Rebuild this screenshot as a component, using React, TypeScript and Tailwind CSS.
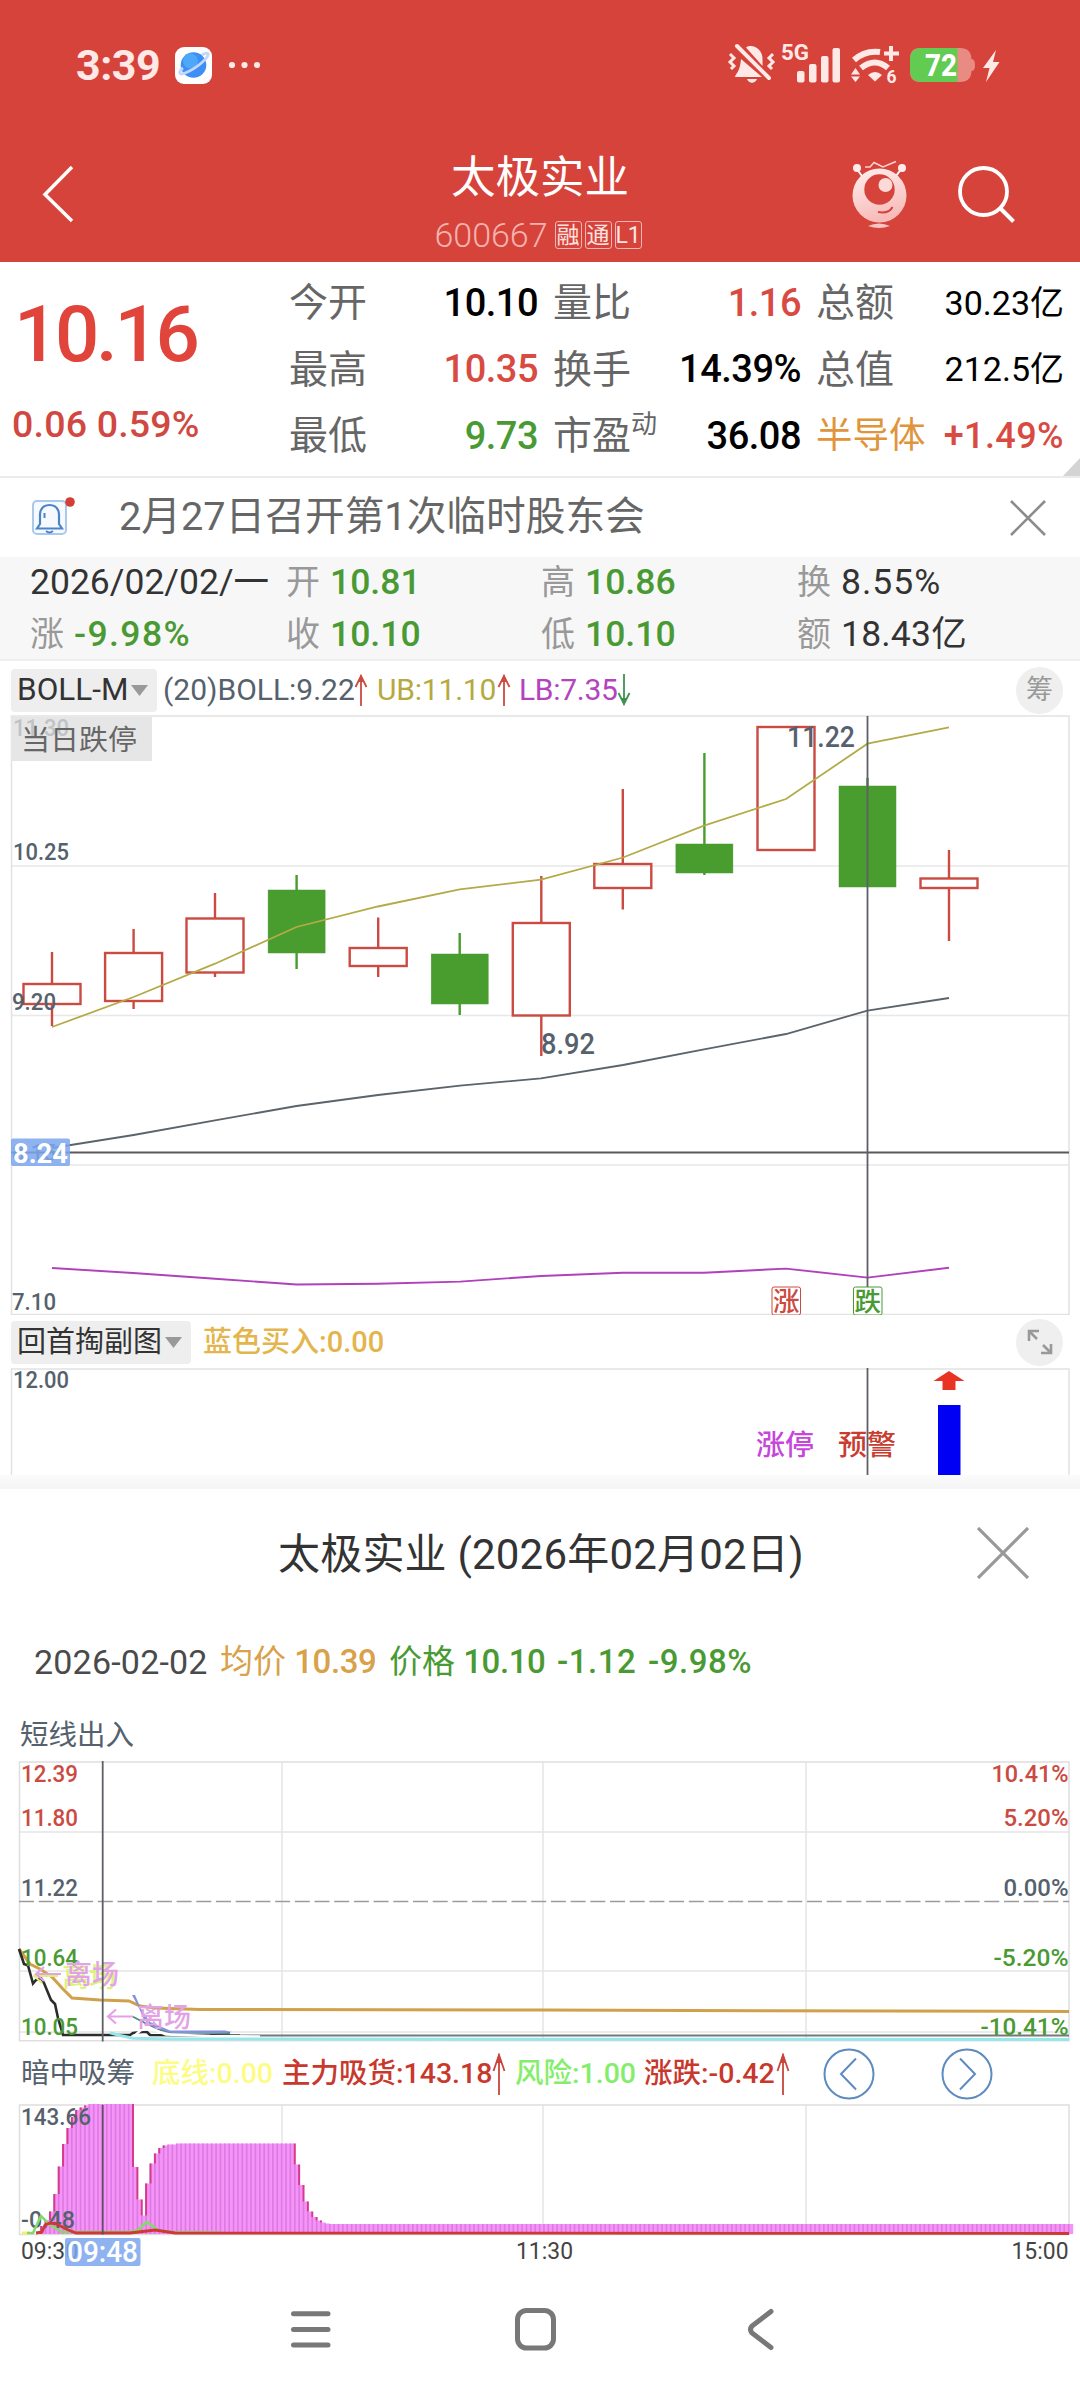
import type { ReactNode } from "react";

const RED = "#cb4a41";
const GREEN = "#4a9a34";
const SLATE = "#55616d";

// Monthly candles, in chart pixels: high / body top / body bottom / low
type Candle = { x: number; high: number; top: number; bottom: number; low: number; up: boolean };

const CANDLES: Candle[] = [
  { x: 52, high: 952, top: 984, bottom: 1004, low: 1026, up: true },
  { x: 133.6, high: 929, top: 953, bottom: 1001, low: 1009, up: true },
  { x: 215, high: 893, top: 918.5, bottom: 972.5, low: 977, up: true },
  { x: 296.6, high: 875, top: 890, bottom: 953, low: 969, up: false },
  { x: 378.2, high: 917.5, top: 948, bottom: 966, low: 977, up: true },
  { x: 459.7, high: 933, top: 954, bottom: 1004, low: 1015, up: false },
  { x: 541.3, high: 876, top: 923, bottom: 1015.5, low: 1056, up: true },
  { x: 622.8, high: 789, top: 864, bottom: 888, low: 909.5, up: true },
  { x: 704.4, high: 753, top: 844, bottom: 873, low: 875, up: false },
  { x: 786, high: 727, top: 727, bottom: 850, low: 850, up: true },
  { x: 867.5, high: 778, top: 786, bottom: 887, low: 887, up: false },
  { x: 949, high: 850, top: 878.5, bottom: 888, low: 941, up: true },
];

const UPPER =
  "52,1027 133.6,997 215,963.7 296.5,927 378,906.5 459.7,889.4 541,879.6 623,857.5 704,825.7 786,799 867.5,743.7 949,727.3";
const MIDDLE =
  "52,1148 133.6,1135 215,1120.4 296.5,1106 378,1095 460,1085.7 541,1078.4 623,1065 704,1049.4 786,1034 867.5,1010.6 949,998";
const LOWER =
  "52,1268 133,1273 215,1278.8 296.5,1284.5 378,1283.7 460,1281.6 541,1276 623,1272.7 704,1272.7 786,1268.6 867.5,1277.6 949,1267.8";

// Top edge of each volume bar; long flat runs are given as [y, count]
const BAR_RUNS: [number, number][] = [
  [2226, 1], [2220, 1], [2211.5, 1], [2194, 1], [2166.5, 1], [2144, 1], [2128, 1], [2117, 1],
  [2110, 1], [2107.5, 1], [2105.5, 1], [2104, 10], [2167, 1], [2199.5, 1], [2215.5, 1],
  [2183.5, 1], [2163.5, 1], [2153.5, 1], [2148, 1], [2145.5, 1], [2144.5, 2], [2143.5, 27],
  [2164.5, 1], [2185, 1], [2201.5, 1], [2211.5, 1], [2217, 1], [2220.5, 1], [2222.5, 1],
  [2223.5, 1], [2224, 230],
];

const BAR_STEP = 4.372;
const BARS = BAR_RUNS.flatMap(([y, n]) => Array.from({ length: n }, () => y))
  .map((y, i) => ({ x: 41.2 + i * BAR_STEP, y }))
  .filter((bar) => bar.x < 1072);

type LabelProps = {
  x: number;
  y: number;
  w: number;
  children: ReactNode;
  size?: number;
  fill?: string;
  weight?: number;
  end?: boolean;
};

function Label({ x, y, w, children, size = 24.5, fill = SLATE, weight = 500, end }: LabelProps) {
  return (
    <text
      x={end ? x - w : x}
      y={y}
      fontSize={size}
      fill={fill}
      fontWeight={weight}
      textLength={w}
      lengthAdjust="spacingAndGlyphs"
    >
      {children}
    </text>
  );
}

function Trend({ color, down = false }: { color: string; down?: boolean }) {
  return (
    <svg width="14" height="32" viewBox="0 0 14 32" fill="none" className={down ? "shrink-0 rotate-180" : "shrink-0"}>
      <path d="M7 2V32M1.500 13L7 2L12.500 13" stroke={color} strokeWidth="1.800" />
      <path d="M7 0L9.500 8H4.500Z" fill={color} />
    </svg>
  );
}

function TallTrend() {
  return (
    <svg width="14" height="42" viewBox="0 0 14 42" fill="none" className="shrink-0">
      <path d="M7 2V42M1.500 18L7 2L12.500 18" stroke="#c8453c" strokeWidth="1.800" />
      <path d="M7 0L10 10H4Z" fill="#c8453c" />
    </svg>
  );
}

function StatusBar() {
  return (
    <div className="flex h-[130px] items-center pl-[76px] pr-[80px] text-[#ffe9e7]">
      <span className="w-[97px] text-[43px] font-bold leading-none tracking-[-0.500px]">3:39</span>
      <svg width="90" height="40" viewBox="173 45 90 40">
        <rect x="175" y="47" width="37" height="37" rx="9" fill="#fff" />
        <circle cx="193.500" cy="65" r="12.800" fill="#3d8ff5" />
        <circle cx="190.500" cy="61" r="7.500" fill="#55b2fb" opacity=".7" />
        <path d="M202 55c5-3 8-2 5 2c-5 7-17 15-25 17c-4 0-2-4 1-6" fill="none" stroke="#c3d6fb" strokeWidth="2.800" />
        <circle cx="232" cy="65" r="3.100" fill="#ffe9e7" />
        <circle cx="244.500" cy="65" r="3.100" fill="#ffe9e7" />
        <circle cx="257" cy="65" r="3.100" fill="#ffe9e7" />
      </svg>
      <svg className="ml-auto" width="275" height="50" viewBox="725 40 275 50" fill="#ffe9e7">
        {/* Muted bell */}
        <path d="M746 47.500C753 43 763 50 762.500 59L762.500 66ZM741 59L762 77H735C736 73 740 72 741 59ZM747 79H757C755 84 749 84 747 79Z" />
        <path d="M737 46L769 78" stroke="#ffe9e7" strokeWidth="4" strokeLinecap="round" />
        <path d="M730 54l4 4-4 4 4 4-3 3M773 54l-4 4 4 4-4 4 3 3" fill="none" stroke="#ffe9e7" strokeWidth="3" />
        <text x="781" y="59.500" fontSize="22" fontWeight="700" textLength="28" lengthAdjust="spacingAndGlyphs">5G</text>
        <rect x="797" y="71" width="7.500" height="11.500" rx="2" />
        <rect x="809" y="64" width="7.500" height="18.500" rx="2" />
        <rect x="821" y="56" width="7.500" height="26.500" rx="2" />
        <rect x="832.500" y="48" width="7.500" height="34.500" rx="2" />
        {/* Wi-Fi 6 */}
        <path d="M854 60Q865 50 880 52" fill="none" stroke="#ffe9e7" strokeWidth="6" />
        <path d="M861 68Q875 57 888 68" fill="none" stroke="#ffe9e7" strokeWidth="6" />
        <path d="M868 75Q875 69 882 75L875 81.500Z" />
        <path d="M891 46V61M884 53.500H899" stroke="#ffe9e7" strokeWidth="4" />
        <path d="M855.500 68L860 74.500H851ZM855.500 82L860 76.500H851Z" />
        <text x="886.500" y="83" fontSize="17.500" fontWeight="700">6</text>
        {/* Battery */}
        <path d="M920 48H960Q971 48 971.500 59Q975 59 975 65Q975 71 971.500 71Q971 82 960 82H920Q910 82 910 71V59Q910 48 920 48Z" fill="#e98a83" />
        <path d="M922 48H957.500V82H922Q910 82 910 70V60Q910 48 922 48Z" fill="#62cb52" />
        <text x="925" y="76" fontSize="31" fontWeight="800" fill="#fff" textLength="32" lengthAdjust="spacingAndGlyphs">72</text>
        <path d="M996 50L983 68H989.500L986 82L999.500 62H993Z" />
      </svg>
    </div>
  );
}

function Header() {
  return (
    <header className="h-[262px] bg-[#d6433b] text-white">
      <StatusBar />
      <div className="flex h-[132px] items-start pl-[42px]">
        <svg className="mt-[34px]" width="172" height="60" viewBox="42 164 172 60" fill="none">
          <path d="M72 167L45 194.500L72 221" stroke="#fff" strokeWidth="3.500" />
        </svg>
        <div className="ml-[206px] mt-5 flex w-[240px] flex-col items-center">
          <h1 className="text-[44.500px] leading-[56px]">太极实业</h1>
          <div className="mt-[9px] flex items-center gap-[3px] whitespace-nowrap pr-1 text-[#ffe3e0]">
            <span className="mr-1 text-[34px] font-light leading-[40px] text-[#f5b3ae]">600667</span>
            {["融", "通", "L1"].map((tag) => (
              <span
                key={tag}
                className="flex h-7 w-[27px] items-center justify-center rounded-[3px] border border-[#f2b5b1] text-[23px] leading-none"
              >
                {tag}
              </span>
            ))}
          </div>
        </div>
        <svg className="ml-[188px] mt-[26px]" width="172" height="80" viewBox="848 156 172 80" fill="none">
          <defs>
            <linearGradient id="mascot" x1="0" y1="0" x2="0.300" y2="1">
              <stop offset="0" stopColor="#fff0ef" />
              <stop offset="1" stopColor="#f7bcb9" />
            </linearGradient>
          </defs>
          <path d="M856 168L862 176M902 168L896 176" stroke="#fff" strokeWidth="2" />
          <circle cx="857" cy="168" r="4" fill="#ffecea" />
          <circle cx="902" cy="168" r="4" fill="#ffecea" />
          <path d="M865 167H870L874 162.500L883 167L896 161.500" stroke="#ffd4d1" strokeWidth="1.500" />
          <circle cx="879.500" cy="195.500" r="27" fill="url(#mascot)" />
          <circle cx="879.500" cy="189.500" r="15.200" fill="#d6433b" />
          <circle cx="885.500" cy="185" r="7" fill="#fbdad8" />
          <path d="M878 212Q889 214 892.500 207" stroke="#d6433b" strokeWidth="2" />
          <path d="M868 226Q879 221 890 226Q879 230 868 226Z" fill="#f7c6c3" />
          <circle cx="983.500" cy="191.500" r="23.500" stroke="#fff" strokeWidth="3.800" />
          <path d="M1001 209L1013.500 221.500" stroke="#fff" strokeWidth="4" />
        </svg>
      </div>
    </header>
  );
}

type QuoteCell = { label: ReactNode; value: string; tone?: string; labelTone?: string; size?: string };

const QUOTES: QuoteCell[][] = [
  [
    { label: "今开", value: "10.10" },
    { label: "最高", value: "10.35", tone: "text-[#d94b42]" },
    { label: "最低", value: "9.73", tone: "text-[#4a9a34]" },
  ],
  [
    { label: "量比", value: "1.16", tone: "text-[#d94b42]" },
    { label: "换手", value: "14.39%" },
    { label: <>市盈<span className="relative -top-4 text-[26px]">动</span></>, value: "36.08" },
  ],
  [
    { label: "总额", value: "30.23亿", size: "text-[34px]" },
    { label: "总值", value: "212.5亿", size: "text-[34px]" },
    {
      label: "半导体",
      value: "+1.49%",
      size: "text-[36px] font-medium tracking-[0.400px]",
      tone: "text-[#d94b42]",
      labelTone: "text-[36.500px] text-[#e0943c]",
    },
  ],
];

function QuotePanel() {
  return (
    <section className="relative flex h-[216px] border-b-2 border-[#ebebeb]">
      <div className="w-[289px] text-[#e0443a]">
        <p className="mt-[26px] pl-[14px] text-[78px] font-medium leading-[94px] tracking-[-3.300px]">10.16</p>
        <p className="mt-5 pl-3 text-[37.500px] font-medium leading-[44px] tracking-[0.200px] text-[#d0483f]">0.06 0.59%</p>
      </div>
      <div className="grid grid-cols-[249px_248px_248px] gap-x-[15px] pt-[8px]">
        {QUOTES.map((column, i) => (
          <dl key={i}>
            {column.map((cell) => (
              <div key={cell.value} className="flex h-[66.500px] items-center justify-between whitespace-nowrap">
                <dt className={cell.labelTone ?? "text-[39px] text-[#666]"}>{cell.label}</dt>
                <dd
                  className={`${cell.size ?? "text-[38px] font-medium tracking-[-0.500px]"} ${cell.tone ?? "text-black"}`}
                >
                  {cell.value}
                </dd>
              </div>
            ))}
          </dl>
        ))}
      </div>
      <svg className="absolute bottom-0 right-0" width="17" height="18">
        <path d="M17 0V18H0Z" fill="#d4d4d4" />
      </svg>
    </section>
  );
}

function Notice() {
  return (
    <section className="flex h-[79px] items-center pl-[30px] pr-[34px] text-[#666]">
      <svg className="-mt-1" width="48" height="44" viewBox="30 494 48 44" fill="none">
        <rect x="33" y="501" width="33" height="33" rx="4" stroke="#a9c8ec" strokeWidth="2" fill="#f6faff" />
        <path d="M37 528.500H62L59 524V514Q58 505 49.500 505Q41 505 40 514V524Z" stroke="#4b84c9" strokeWidth="2.200" />
        <path d="M46 531Q49.500 534 53 531M44.500 513V518" stroke="#4b84c9" strokeWidth="2" />
        <circle cx="70" cy="502" r="4.800" fill="#d33f37" />
      </svg>
      <p className="-mt-0.5 ml-[41px] text-[39.700px] leading-none">2月27日召开第1次临时股东会</p>
      <svg className="ml-auto" width="36" height="36" viewBox="0 0 36 36">
        <path d="M1 1L35 35M35 1L1 35" stroke="#8c8c8c" strokeWidth="2.600" />
      </svg>
    </section>
  );
}

const DAY_CELLS = [
  { label: "", value: "2026/02/02/一", tone: "text-[#333]" },
  { label: "开", value: "10.81", tone: "font-medium text-[#4a9a34]" },
  { label: "高", value: "10.86", tone: "font-medium text-[#4a9a34]" },
  { label: "换", value: "8.55%", tone: "tracking-[1px] text-[#333]" },
  { label: "涨", value: "-9.98%", tone: "font-medium tracking-[1.400px] text-[#4a9a34]" },
  { label: "收", value: "10.10", tone: "font-medium text-[#4a9a34]" },
  { label: "低", value: "10.10", tone: "font-medium text-[#4a9a34]" },
  { label: "额", value: "18.43亿", tone: "tracking-[0.200px] text-[#333]" },
];

function DaySummary() {
  return (
    <section className="h-[104px] border-b-2 border-[#eee] bg-[#f7f7f7]">
      <div className="grid grid-cols-[256px_255px_256px_1fr] pl-[30px]">
        {DAY_CELLS.map((cell) => (
          <p key={cell.label} className="-mt-px flex h-[53px] items-center gap-2.5 whitespace-nowrap text-[35.500px]">
            {cell.label && <span className="text-[34px] text-[#999]">{cell.label}</span>}
            <span className={cell.tone}>{cell.value}</span>
          </p>
        ))}
      </div>
    </section>
  );
}

function Picker({ children }: { children: ReactNode }) {
  return (
    <button className="flex h-[43px] items-center gap-[2px] rounded-[4px] bg-[#eee] pl-[6px] pr-[9px] text-left leading-none text-[#333]">
      {children}
      <svg width="17" height="11">
        <path d="M0 0H17L8.500 11Z" fill="#999" />
      </svg>
    </button>
  );
}

function BollRow() {
  return (
    <div className="flex h-[54px] items-center pl-[11px] pr-[17px] pt-1 text-[30px] leading-none text-[#55616d]">
      <Picker>
        <span className="w-[112px] text-[31.500px]">BOLL-M</span>
      </Picker>
      <span className="ml-1.5 w-[191px]">(20)BOLL:9.22</span>
      <Trend color="#cb4a41" />
      <span className="ml-[9px] w-[120px] tracking-[-0.200px] text-[#b5a93f]">UB:11.10</span>
      <Trend color="#cb4a41" />
      <span className="ml-2 w-[98px] tracking-[-0.300px] text-[#b344bd]">LB:7.35</span>
      <Trend color="#3f9250" down />
      <span className="ml-auto flex size-[47px] items-center justify-center rounded-full bg-[#efefef] text-[27px] text-[#999]">
        筹
      </span>
    </div>
  );
}

function CandleChart() {
  return (
    <svg className="block" width="1080" height="600" viewBox="0 715 1080 600" fill="none">
      <path d="M11 866H1069M11 1015.500H1069M11 1165H1069" stroke="#e8e8e8" strokeWidth="1.500" />
      <rect x="11.500" y="716" width="1057.500" height="598.500" stroke="#e2e2e2" strokeWidth="1.500" />
      {CANDLES.map((c) => (
        <g key={c.x} stroke={c.up ? RED : "#499c2e"} strokeWidth="2.400">
          <path d={`M${c.x} ${c.high}V${c.top}M${c.x} ${c.bottom}V${c.low}`} />
          <rect
            x={c.x - 28.5}
            y={c.top}
            width="57"
            height={c.bottom - c.top}
            fill={c.up ? "none" : "#499c2e"}
            strokeWidth={c.up ? 2.4 : 0.5}
          />
        </g>
      ))}
      <polyline points={UPPER} stroke="#b3ab48" strokeWidth="1.800" />
      <polyline points={MIDDLE} stroke="#5b636b" strokeWidth="1.800" />
      <polyline points={LOWER} stroke="#b040bb" strokeWidth="1.900" />
      <Label x={13} y={860} w={56}>10.25</Label>
      <Label x={12} y={1010} w={44}>9.20</Label>
      <Label x={12} y={1310} w={44}>7.10</Label>
      <Label x={787} y={747} w={68} size={29}>11.22</Label>
      <Label x={541} y={1054} w={54} size={29}>8.92</Label>
      <rect x="11" y="717" width="141" height="44" fill="#e6e6e6" />
      <Label x={13} y={736} w={56} fill="#bfc3c6">11.30</Label>
      <Label x={21} y={749.5} w={116} size={28.5} fill="#666" weight={400}>当日跌停</Label>
      <Label x={12} y={1161} w={44}>8.15</Label>
      <path d="M11 1152.500H1069" stroke="#5d585c" strokeWidth="1.800" />
      <path d="M867.500 716V1315" stroke="#5d6066" strokeWidth="1.800" />
      <rect x="11" y="1138.500" width="59" height="27.500" rx="2" fill="#7ca6ee" opacity=".86" />
      <Label x={13} y={1162.5} w={55} size={28} fill="#fff" weight={700}>8.24</Label>
      <rect x="772" y="1287" width="28.500" height="28" rx="2" fill="#fff" stroke={RED} />
      <Label x={773} y={1310.5} w={26.5} size={26.5} fill={RED}>涨</Label>
      <rect x="853.500" y="1287" width="28.500" height="28" rx="2" fill="#fff" stroke={GREEN} />
      <Label x={854.5} y={1310.5} w={26.5} size={26.5} fill={GREEN}>跌</Label>
    </svg>
  );
}

function SubRow() {
  return (
    <div className="flex h-[53px] items-center pl-[11px] pr-[17px] pt-px text-[29px] leading-none">
      <Picker>
        <span className="w-[146px]">回首掏副图</span>
      </Picker>
      <span className="ml-[12px] font-medium text-[#e3b54c]">蓝色买入:0.00</span>
      <span className="ml-auto flex size-[47px] items-center justify-center rounded-full bg-[#efefef]">
        <svg width="26" height="26" viewBox="0 0 26 26" fill="none" stroke="#999" strokeWidth="2.600">
          <path d="M2 12V2H12M2 2L10 10M24 15V24H14M24 24L16 16" />
        </svg>
      </span>
    </div>
  );
}

function SignalChart() {
  return (
    <svg className="block" width="1080" height="107" viewBox="0 1368 1080 107" fill="none">
      <path d="M11.500 1475V1369H1069V1475" stroke="#e2e2e2" strokeWidth="1.500" />
      <Label x={13} y={1388} w={56}>12.00</Label>
      <Label x={756} y={1455} w={58} size={28.5} fill="#c747da">涨停</Label>
      <Label x={838} y={1455} w={58} size={28.5} fill="#c93d30">预警</Label>
      <path d="M867.500 1368V1475" stroke="#5d6066" strokeWidth="1.800" />
      <path d="M949 1371L964.500 1381H955.500V1390H942.500V1381H933.500Z" fill="#e93323" />
      <rect x="938" y="1405" width="22.500" height="70" fill="#0000f5" />
    </svg>
  );
}

function MinuteChart() {
  return (
    <svg className="block" width="1080" height="282" viewBox="0 1760 1080 282" fill="none">
      <path d="M19 1832H1069M19 1971H1069M19 2032H1069M282 1762V2041M543 1762V2041M806 1762V2041" stroke="#e5e5e5" strokeWidth="1.500" />
      <rect x="19.500" y="1762" width="1049.500" height="278.700" stroke="#dedede" strokeWidth="1.500" />
      <path d="M19 1901.500H1069" stroke="#9c9c9c" strokeWidth="1.300" strokeDasharray="15 4.700" />
      <polyline
        points="19,1949 30,1964 40,1969 52,1977 62,1988 72,1998 100,2000 129,2001 140,2006 155,2008 200,2009.5 540,2010 1069,2011.5"
        stroke="#d0a04d"
        strokeWidth="3"
      />
      <polyline
        points="19,1949 24,1964 28,1965.5 33,1983.5 36,1980 41,1978 44,1983 51,2000 55,2004 58,2018 63,2035 130,2035 133,2033 142,2032 147,2032 150,2035 240,2035.5"
        stroke="#2c2c2c"
        strokeWidth="2.600"
      />
      <path d="M230 2035.500H1069" stroke="#747a7c" strokeWidth="2" />
      <Label x={21} y={1781.5} w={57} fill={RED}>12.39</Label>
      <Label x={21} y={1825.5} w={57} fill={RED}>11.80</Label>
      <Label x={21} y={1895.5} w={57}>11.22</Label>
      <Label x={21} y={1965.5} w={57} fill={GREEN}>10.64</Label>
      <Label x={21} y={2034.5} w={57} fill={GREEN}>10.05</Label>
      <Label end x={1068.5} y={1781.5} w={77} fill={RED}>10.41%</Label>
      <Label end x={1068.5} y={1825.5} w={65} fill={RED}>5.20%</Label>
      <Label end x={1068.5} y={1895.5} w={65}>0.00%</Label>
      <Label end x={1068.5} y={1965.5} w={75} fill={GREEN}>-5.20%</Label>
      <Label end x={1068.5} y={2034.5} w={88} fill={GREEN}>-10.41%</Label>
      <polyline points="133,2016.7 145,2023 160,2030 172,2032.5 230,2033" stroke="#4c8a78" strokeWidth="1.800" />
      <path d="M132 1995L135 1995L141 2009L150 2022L170 2030.500H225L232 2032L225 2033H172L155 2028L144 2020L139 2008Z" fill="#8490da" />
      <polyline points="132,2038 141,2030 152,2029 166,2034.5 210,2036 260,2036.500" stroke="#fff" strokeWidth="2.500" />
      {/* Exit signals, the first one overlaps an older marker */}
      <Label x={62} y={1986.5} w={54} size={27} fill="#dcf279">离场</Label>
      <path d="M58 1976H34M42 1969L34 1976L42 1983" stroke="#dcf279" strokeWidth="2" />
      <path d="M61 1974H36M44 1967L36 1974L44 1981" stroke="#e3a2e6" strokeWidth="2.200" />
      <Label x={65} y={1984} w={54} size={27} fill="#e3a2e6">离场</Label>
      <path d="M133 2016.500H108M116 2009.500L108 2016.500L116 2023.500" stroke="#e3a2e6" strokeWidth="2.200" />
      <Label x={137} y={2026.5} w={54} size={27} fill="#e3a2e6">离场</Label>
      <polyline points="110,2032.7 120,2035.5 133,2038.3 170,2039 1069,2039.5" stroke="#97e6ea" strokeWidth="3" />
      <path d="M102.700 1761V2041.500" stroke="#5d6066" strokeWidth="1.800" />
    </svg>
  );
}

function RoundArrow({ d }: { d: string }) {
  return (
    <svg width="52" height="54" viewBox="0 0 52 54" fill="none" stroke="#5d8bc0" strokeWidth="2">
      <circle cx="26" cy="27" r="24.500" />
      <path d={d} />
    </svg>
  );
}

function ChipRow() {
  return (
    <div className="flex h-[62px] items-center whitespace-nowrap pl-[21px] pt-0.5 text-[28.500px] leading-none text-[#55616d]">
      <span className="w-[131px]">暗中吸筹</span>
      <span className="w-[130px] font-medium text-[#fcfc84]">底线:0.00</span>
      <span className="w-[210px] font-medium text-[#c8382d]">主力吸货:143.18</span>
      <TallTrend />
      <span className="ml-[9px] w-[129px] font-medium text-[#84ee6a]">风险:1.00</span>
      <span className="w-[132px] font-medium text-[#c8382d]">涨跌:-0.42</span>
      <TallTrend />
      <div className="ml-[33px] flex gap-[66px]">
        <RoundArrow d="M33 11.500L18 27L33 42.500" />
        <RoundArrow d="M19 11.500L34 27L19 42.500" />
      </div>
    </div>
  );
}

function ChipChart() {
  return (
    <svg className="block" width="1080" height="166" viewBox="0 2104 1080 166" fill="none">
      <path d="M282 2105V2234M543 2105V2234M806 2105V2234" stroke="#e5e5e5" strokeWidth="1.500" />
      <rect x="19.500" y="2105" width="1049.500" height="129.500" stroke="#dedede" strokeWidth="1.500" />
      {BARS.map((bar, i) => {
        const prev = BARS[i - 1]?.y ?? 2234;
        const edge = Math.abs(prev - bar.y) > 1.5;
        return (
          <g key={i}>
            <rect x={bar.x} y={bar.y} width={BAR_STEP + 0.2} height={2234 - bar.y} fill="#f593f7" />
            <path d={`M${bar.x} ${bar.y}V2234`} stroke="#dc79e2" strokeWidth="1.600" />
            {edge && (
              <path
                d={`M${bar.x} ${Math.min(prev, bar.y)}V${Math.max(prev, bar.y)}`}
                stroke="#d43a8d"
                strokeWidth="2"
              />
            )}
          </g>
        );
      })}
      <path d="M22 2233H30" stroke="#f5f06a" strokeWidth="3" />
      <Label x={21} y={2125} w={70}>143.66</Label>
      <Label x={21} y={2228} w={54}>-0.48</Label>
      <polyline
        points="27,2233 33,2233 41,2216 50,2225 62,2232 80,2232 130,2232 138,2230 146.500,2222 158,2230 172,2232 220,2232.500"
        stroke="#86d86c"
        strokeWidth="2.600"
      />
      <polyline
        points="36,2233 42,2232 45,2225 50,2223 57,2224 66,2229 76,2233 130,2233 155,2230 175,2233 1069,2233.500"
        stroke="#cc3a33"
        strokeWidth="2.800"
      />
      <path d="M102.700 2105V2234.500" stroke="#5d5066" strokeWidth="1.800" />
      <Label x={21} y={2258.5} w={57} fill="#444" weight={400}>09:30</Label>
      <Label x={516} y={2258.5} w={57} fill="#444" weight={400}>11:30</Label>
      <Label end x={1068.5} y={2258.5} w={57} fill="#444" weight={400}>15:00</Label>
      <rect x="65" y="2238" width="75.500" height="28" rx="2" fill="#7ca6ee" opacity=".86" />
      <Label x={67} y={2262} w={71} size={29} fill="#fff">09:48</Label>
    </svg>
  );
}

function DetailSheet() {
  return (
    <section className="bg-white">
      <div className="flex h-[131px] items-center justify-between pl-[278px] pr-[51px]">
        <h2 className="whitespace-nowrap text-[42px] leading-none tracking-[0.200px] text-[#333]">
          太极实业 (2026年02月02日)
        </h2>
        <svg className="mt-[-3px]" width="52" height="52" viewBox="0 0 52 52">
          <path d="M1 1L51 51M51 1L1 51" stroke="#999" strokeWidth="3.200" />
        </svg>
      </div>
      <div className="flex h-[83px] items-center whitespace-nowrap pl-[34px] text-[33px] leading-none text-[#4a9a34]">
        <span className="w-[186px] text-[34px] tracking-[0.200px] text-[#4a4a4a]">2026-02-02</span>
        <span className="w-[169px] text-[#d8a14a]">
          均价 <span className="font-medium tracking-[-0.400px]">10.39</span>
        </span>
        <span className="w-[168px]">
          价格 <span className="font-medium tracking-[-0.400px]">10.10</span>
        </span>
        <span className="w-[91px] font-medium tracking-[0.500px]">-1.12</span>
        <span className="font-medium tracking-[0.500px]">-9.98%</span>
      </div>
      <h3 className="flex h-[57px] items-center pl-[20px] pt-[10px] text-[28.500px] leading-none text-[#55616d]">短线出入</h3>
      <MinuteChart />
      <ChipRow />
      <ChipChart />
    </section>
  );
}

function SystemNav() {
  return (
    <nav className="flex h-[130px] items-start">
      <svg className="mt-[34px]" width="1080" height="52" viewBox="0 2304 1080 52" fill="none" stroke="#787878" strokeWidth="5" strokeLinecap="round">
        <path d="M293.500 2313.700H328M293.500 2329.500H328M293.500 2345H328" />
        <rect x="517.500" y="2310.500" width="36" height="37.500" rx="9" />
        <path d="M771 2311.500L752 2326Q749 2329.500 752 2333L771 2347.500" />
      </svg>
    </nav>
  );
}

export default function App() {
  return (
    <main className="h-[2400px] w-[1080px] overflow-hidden bg-white font-[Roboto,'Noto_Sans_CJK_SC',sans-serif]">
      <Header />
      <QuotePanel />
      <Notice />
      <DaySummary />
      <BollRow />
      <CandleChart />
      <SubRow />
      <SignalChart />
      <div className="h-[14px] bg-linear-to-b from-[#fbfbfb] to-[#f5f5f5]" />
      <DetailSheet />
      <SystemNav />
    </main>
  );
}
